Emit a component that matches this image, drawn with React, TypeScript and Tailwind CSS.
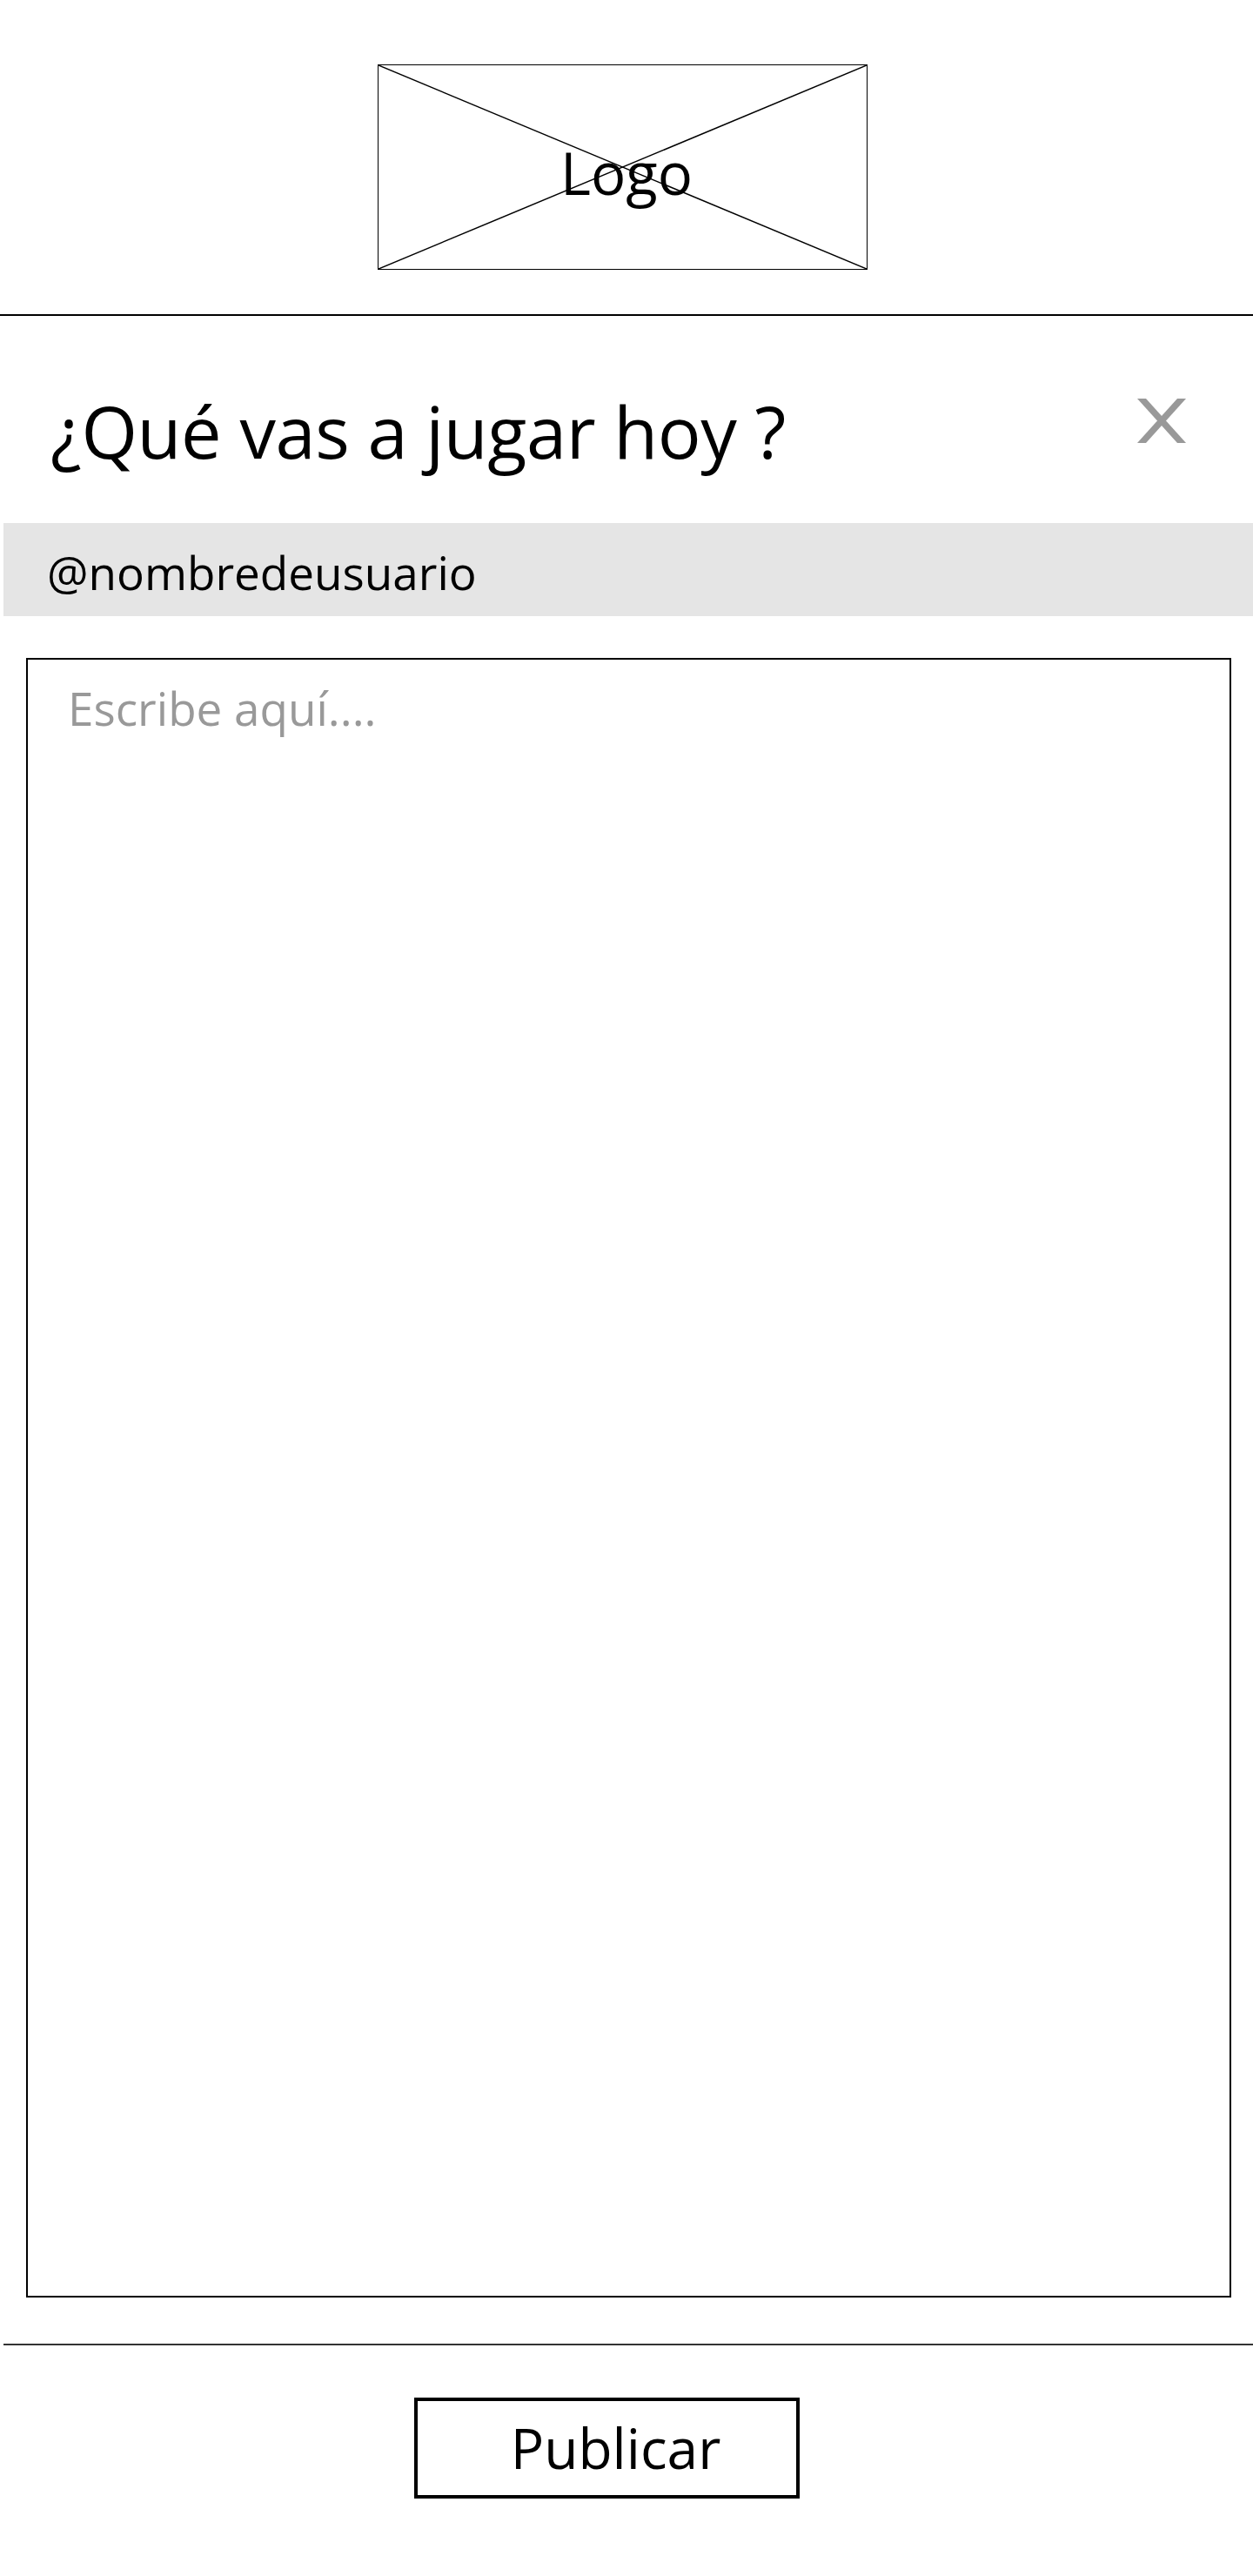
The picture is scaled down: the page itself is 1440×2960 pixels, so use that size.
import { useState } from 'react';

const font = { fontFamily: '"Open Sans", "Noto Sans", sans-serif' };

function LogoPlaceholder() {
  return (
    <div className="relative mr-[9px] flex h-[236px] w-[563px] items-center justify-center border-[1.5px] border-black">
      <svg
        className="absolute inset-0 h-full w-full"
        viewBox="0 0 100 100"
        preserveAspectRatio="none"
      >
        <line x1="0" y1="0" x2="100" y2="100" stroke="black" strokeWidth="1.5" vectorEffect="non-scaling-stroke" />
        <line x1="100" y1="0" x2="0" y2="100" stroke="black" strokeWidth="1.5" vectorEffect="non-scaling-stroke" />
      </svg>
      <span className="relative pl-[9px] pt-[12px] text-[67px] leading-none text-black">Logo</span>
    </div>
  );
}

function CloseIcon() {
  return (
    <svg width="56" height="51" viewBox="0 0 56 51" aria-label="Cerrar">
      <polygon points="0,0 10,0 56,51 46,51" fill="#999999" />
      <polygon points="46,0 56,0 10,51 0,51" fill="#999999" />
    </svg>
  );
}

export default function App() {
  const [text, setText] = useState('');

  return (
    <div className="min-h-[2960px] w-[1440px] bg-white text-black" style={font}>
      <header className="flex justify-center border-b-2 border-black pb-[51px] pt-[74px]">
        <LogoPlaceholder />
      </header>

      <section className="flex items-start justify-between pl-[58px] pr-[77px] pt-[90px]">
        <h1 className="text-[83px] font-normal leading-none tracking-[-0.005em]">¿Qué vas a jugar hoy ?</h1>
        <button type="button" className="mt-[5px]">
          <CloseIcon />
        </button>
      </section>

      <div className="ml-[4px] mt-[65px] h-[107px] bg-[#e5e5e5] pl-[50px] pt-[30px]">
        <span className="text-[53px] leading-none">@nombredeusuario</span>
      </div>

      <div className="ml-[30px] mr-[25px] mt-[48px] h-[1884px]">
        <textarea
          value={text}
          onChange={(e) => setText(e.target.value)}
          placeholder="Escribe aquí...."
          className="block h-full w-full resize-none border-2 border-black bg-white pl-[46px] pr-6 pt-[29px] text-[53px] leading-none text-black outline-none placeholder:text-[#999999]"
          style={font}
        />
      </div>

      <div className="ml-[4px] mt-[53px] h-[2px] bg-[#333333]" />

      <div className="flex justify-center pt-[60px]">
        <button
          type="button"
          className="mr-[45px] flex h-[116px] w-[443px] items-center justify-center border-4 border-black bg-white pl-[20px] text-[64px] leading-none text-black"
        >
          Publicar
        </button>
      </div>
    </div>
  );
}
